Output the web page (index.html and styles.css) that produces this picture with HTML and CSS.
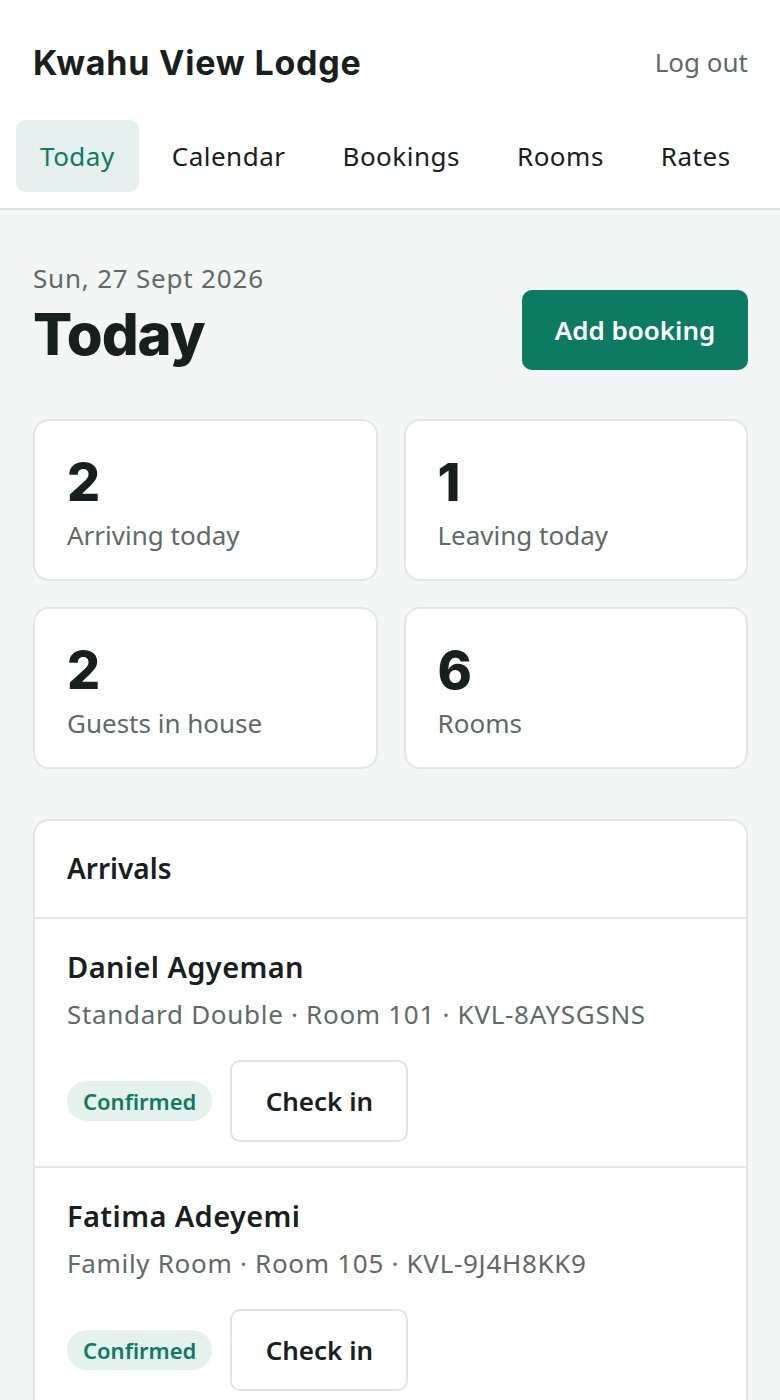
FILE: index.html
```html
<!DOCTYPE html>
<html lang="en">
<head>
<meta charset="UTF-8">
<meta name="viewport" content="width=device-width, initial-scale=1.0">
<title>Kwahu View Lodge - Today</title>
<link rel="stylesheet" href="styles.css">
</head>
<body>

<header class="site-header">
    <div class="brand-row">
        <div class="brand">Kwahu View Lodge</div>
        <a class="logout" href="#">Log out</a>
    </div>
    <nav class="tabs">
        <a class="tab active" href="#">Today</a>
        <a class="tab" href="#">Calendar</a>
        <a class="tab" href="#">Bookings</a>
        <a class="tab" href="#">Rooms</a>
        <a class="tab" href="#">Rates</a>
    </nav>
</header>

<main class="page">
    <div class="page-head">
        <div>
            <div class="date">Sun, 27 Sept 2026</div>
            <h1>Today</h1>
        </div>
        <button class="btn-primary">Add booking</button>
    </div>

    <div class="stats">
        <div class="stat">
            <div class="stat-num">2</div>
            <div class="stat-label">Arriving today</div>
        </div>
        <div class="stat">
            <div class="stat-num">1</div>
            <div class="stat-label">Leaving today</div>
        </div>
        <div class="stat">
            <div class="stat-num">2</div>
            <div class="stat-label">Guests in house</div>
        </div>
        <div class="stat">
            <div class="stat-num">6</div>
            <div class="stat-label">Rooms</div>
        </div>
    </div>

    <section class="panel">
        <h2 class="panel-title">Arrivals</h2>
        <div class="booking">
            <div class="guest">Daniel Agyeman</div>
            <div class="meta">Standard Double · Room 101 · KVL-8AYSGSNS</div>
            <div class="actions">
                <span class="badge">Confirmed</span>
                <button class="btn-outline">Check in</button>
            </div>
        </div>
        <div class="booking">
            <div class="guest">Fatima Adeyemi</div>
            <div class="meta">Family Room · Room 105 · KVL-9J4H8KK9</div>
            <div class="actions">
                <span class="badge">Confirmed</span>
                <button class="btn-outline">Check in</button>
            </div>
        </div>
    </section>
</main>

</body>
</html>
```

FILE: styles.css
```css
body {
    margin: 0;
    font-family: "Noto Sans", "Liberation Sans", sans-serif;
    background-color: #f3f6f4;
    color: #18201d;
}
a {
    text-decoration: none;
    color: inherit;
}
button {
    font-family: inherit;
    cursor: pointer;
}

/* header */
.site-header {
    background-color: #fff;
    border-bottom: 2px solid #e0e5e2;
    padding: 24px 16px 16px;
}
.brand-row {
    display: flex;
    justify-content: space-between;
    align-items: center;
    height: 76px;
    padding: 0 17px;
    margin-bottom: 20px;
}
.brand {
    font-family: Inter, sans-serif;
    font-weight: 700;
    font-size: 34px;
    letter-spacing: 0.8px;
}
.logout {
    font-size: 26px;
    color: #5f6a66;
    margin-right: -1px;
}
.tabs {
    display: flex;
    gap: 9px;
}
.tab {
    height: 72px;
    line-height: 72px;
    padding: 0 24px;
    font-size: 26px;
    letter-spacing: 0.5px;
    border-radius: 10px;
}
.tab.active {
    background-color: #e5efed;
    color: #0d7a62;
}

/* page */
.page {
    padding: 50px 32px 0 33px;
}
.page-head {
    display: flex;
    justify-content: space-between;
    align-items: flex-end;
}
.date {
    font-size: 26px;
    line-height: 36px;
    letter-spacing: 0.8px;
    color: #5f6a66;
}
h1 {
    margin: 2px 0 0;
    font-family: Inter, sans-serif;
    font-weight: 800;
    font-size: 58px;
    line-height: 72px;
    letter-spacing: -1px;
}
.btn-primary {
    width: 226px;
    height: 80px;
    border: none;
    border-radius: 10px;
    background-color: #0d7a62;
    color: #fff;
    font-size: 26px;
    font-weight: 600;
}

.stats {
    display: grid;
    grid-template-columns: 1fr 1fr;
    gap: 26px;
    margin-top: 49px;
}
.stat {
    height: 162px;
    box-sizing: border-box;
    padding: 28px 32px 0;
    background-color: #fff;
    border: 2px solid #e2e7e4;
    border-radius: 16px;
}
.stat-num {
    font-family: Inter, sans-serif;
    font-weight: 800;
    font-size: 52px;
    line-height: 68px;
}
.stat-label {
    font-size: 26px;
    line-height: 36px;
    color: #5f6a66;
}

.panel {
    margin-top: 50px;
    background-color: #fff;
    border: 2px solid #e2e7e4;
    border-bottom: none;
    border-radius: 16px 16px 0 0;
}
.panel-title {
    margin: 0;
    padding: 0 32px;
    height: 96px;
    line-height: 94px;
    font-size: 28px;
    font-weight: 600;
    border-bottom: 2px solid #e2e7e4;
}
.booking {
    padding: 27px 32px 24px;
    border-bottom: 2px solid #e2e7e4;
}
.guest {
    font-size: 29px;
    font-weight: 600;
    line-height: 42px;
    letter-spacing: 0.4px;
}
.meta {
    margin-top: 8px;
    font-size: 26px;
    line-height: 36px;
    letter-spacing: 0.7px;
    color: #5f6a66;
}
.actions {
    display: flex;
    align-items: center;
    gap: 18px;
    margin-top: 28px;
}
.badge {
    padding: 0 16px;
    height: 40px;
    line-height: 40px;
    border-radius: 20px;
    background-color: #e4f1ec;
    color: #0d7a62;
    font-size: 22px;
    font-weight: 600;
}
.btn-outline {
    width: 178px;
    height: 82px;
    background-color: #fff;
    border: 2px solid #dfe4e1;
    border-radius: 10px;
    color: #18201d;
    font-size: 26px;
    font-weight: 600;
}
```
